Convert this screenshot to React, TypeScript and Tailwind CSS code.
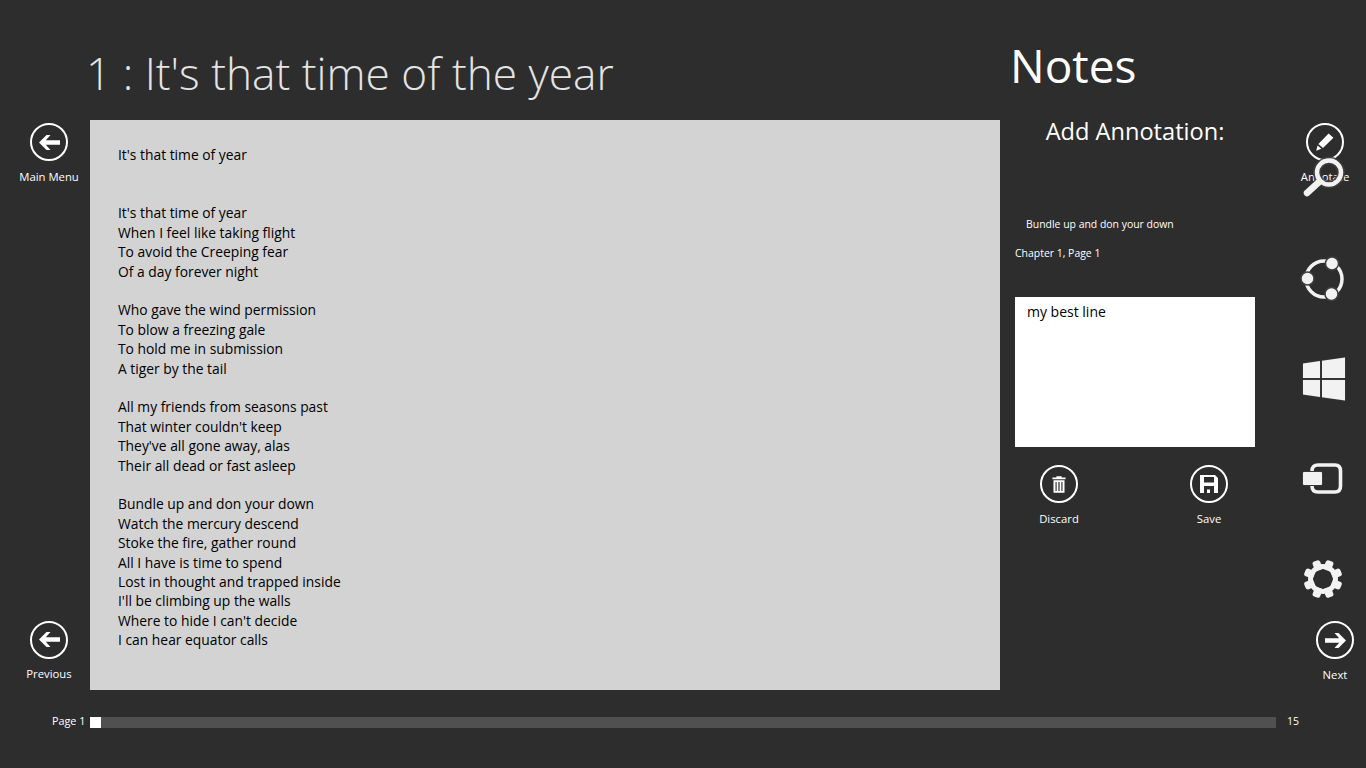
const stanzas = [
  ["It's that time of year", "When I feel like taking flight", "To avoid the Creeping fear", "Of a day forever night"],
  ["Who gave the wind permission", "To blow a freezing gale", "To hold me in submission", "A tiger by the tail"],
  ["All my friends from seasons past", "That winter couldn't keep", "They've all gone away, alas", "Their all dead or fast asleep"],
  [
    "Bundle up and don your down",
    "Watch the mercury descend",
    "Stoke the fire, gather round",
    "All I have is time to spend",
    "Lost in thought and trapped inside",
    "I'll be climbing up the walls",
    "Where to hide I can't decide",
    "I can hear equator calls",
  ],
];

function ArrowIcon({ right = false }: { right?: boolean }) {
  return (
    <svg viewBox="0 0 21 15" className={right ? "w-[21px] h-[15px] rotate-180" : "w-[21px] h-[15px]"}>
      <path d="M7.5 0 L0 7.5 L7.5 15 H11.5 L6.8 9.8 H21 V5.2 H6.8 L11.5 0 Z" fill="#fff" />
    </svg>
  );
}

function PencilIcon() {
  return (
    <svg viewBox="0 0 20 20" className="w-5 h-5">
      <path d="M13.6 1.6 L18.4 5.8 L8 16 L3.4 12 Z" fill="#fff" />
      <path d="M2.6 13.4 L6.4 16.8 L1.2 18.8 Z" fill="#fff" />
    </svg>
  );
}

function TrashIcon() {
  return (
    <svg viewBox="0 0 16 20" className="w-[14px] h-[19px]">
      <path d="M5 0.5 H11 V2 H15.5 V4 H0.5 V2 H5 Z" fill="#fff" />
      <path d="M1.7 5 H14.3 V19.5 H1.7 Z M4 7 V17.5 H5.3 V7 Z M7.3 7 V17.5 H8.7 V7 Z M10.7 7 V17.5 H12 V7 Z" fill="#fff" fillRule="evenodd" />
    </svg>
  );
}

function SaveIcon() {
  return (
    <svg viewBox="0 0 18 18" className="w-[18px] h-[18px]">
      <path
        d="M0 0 H15 L18 3 V18 H0 Z M4 2 V7.5 H14 V2 Z M4 11 V18 H14 V11 Z M7 14.5 H10 V18 H7 Z"
        fill="#fff"
        fillRule="evenodd"
      />
    </svg>
  );
}

function CircleButton({ label, children, className = "" }: { label: string; children: React.ReactNode; className?: string }) {
  return (
    <div className={`flex flex-col items-center w-[80px] ${className}`}>
      <div className="w-[38px] h-[38px] rounded-full border-2 border-white flex items-center justify-center">{children}</div>
      <span className="text-[11.3px] leading-[16px] mt-[7.5px] text-white whitespace-nowrap">{label}</span>
    </div>
  );
}

function SearchIcon() {
  return (
    <svg viewBox="0 0 44 44" className="w-[44px] h-[44px]">
      <circle cx="28" cy="16.5" r="12" fill="none" stroke="#3f3f3f" strokeWidth="8" opacity="0.8" />
      <path d="M18 26 L6 37" stroke="#f2f2f2" strokeWidth="6.5" strokeLinecap="round" />
      <circle cx="28" cy="16.5" r="12" fill="none" stroke="#f2f2f2" strokeWidth="4.5" />
    </svg>
  );
}

function ShareIcon() {
  return (
    <svg viewBox="0 0 46 46" className="w-[46px] h-[46px]">
      <circle cx="24" cy="23" r="18" fill="none" stroke="#f2f2f2" strokeWidth="3.5" />
      <g fill="#f2f2f2" stroke="#3f3f3f" strokeWidth="1.5">
        <circle cx="32" cy="7.5" r="6.5" />
        <circle cx="7.5" cy="22.5" r="6.5" />
        <circle cx="31.5" cy="38" r="6.5" />
      </g>
    </svg>
  );
}

function WindowsIcon() {
  return (
    <svg viewBox="0 0 44 44" className="w-[44px] h-[44px]">
      <path
        d="M1 6.5 L18 4 V21 H1 Z M20 3.7 L43 0.5 V21 H20 Z M1 23 H18 V40 L1 37.5 Z M20 23 H43 V43.5 L20 40.3 Z"
        fill="#f2f2f2"
        stroke="#3f3f3f"
        strokeWidth="1"
        paintOrder="stroke"
      />
    </svg>
  );
}

function DevicesIcon() {
  return (
    <svg viewBox="0 0 42 32" className="w-[42px] h-[32px]">
      <path
        d="M10 9 Q10 3 16 3 H33 Q38.5 3 38.5 9 V24 Q38.5 30 33 30 H16 Q10 30 10 24"
        fill="none"
        stroke="#f2f2f2"
        strokeWidth="3.6"
      />
      <rect x="1" y="10" width="19" height="13" rx="1" fill="#f2f2f2" stroke="#3f3f3f" strokeWidth="1.5" paintOrder="stroke" />
    </svg>
  );
}

function GearIcon() {
  const teeth = [0, 45, 90, 135, 180, 225, 270, 315];
  return (
    <svg viewBox="0 0 40 40" className="w-[40px] h-[40px]">
      {teeth.map((deg) => (
        <rect key={deg} x="16" y="0.5" width="8" height="10" rx="2.5" fill="#f2f2f2" transform={`rotate(${deg + 22.5} 20 20)`} />
      ))}
      <circle cx="20" cy="20" r="12.5" fill="none" stroke="#f2f2f2" strokeWidth="5" />
    </svg>
  );
}

export default function App() {
  return (
    <div
      className="w-[1366px] h-[768px] overflow-hidden bg-[#2d2d2d] text-white flex flex-col"
      style={{ fontFamily: '"Open Sans", "Noto Sans", sans-serif' }}
    >
      <div className="flex h-[690px]">
        {/* left rail */}
        <div className="w-[90px] shrink-0 pt-[123px] pb-[8px] flex flex-col justify-between">
          <CircleButton label="Main Menu" className="ml-[9px]">
            <ArrowIcon />
          </CircleButton>
          <CircleButton label="Previous" className="ml-[9px]">
            <ArrowIcon />
          </CircleButton>
        </div>

        {/* reader */}
        <div className="w-[910px] shrink-0 flex flex-col">
          <div className="h-[120px] shrink-0 pt-[38px]">
            <h1 className="text-[44.2px] leading-[70px] font-light text-[#e4e4e4] whitespace-nowrap -ml-[4px]">1 : It's that time of the year</h1>
          </div>
          <div className="h-[570px] bg-[#d3d3d3] text-black pl-[28px] pt-[25px] text-[13.85px] leading-[19.4px]">
            <p className="mb-[39px]">It's that time of year</p>
            {stanzas.map((lines, i) => (
              <div key={i} className="mb-[19.4px]">
                {lines.map((line) => (
                  <p key={line} className="whitespace-nowrap">
                    {line}
                  </p>
                ))}
              </div>
            ))}
          </div>
        </div>

        {/* notes */}
        <div className="w-[270px] shrink-0 pl-[15px] flex flex-col">
          <h2 className="text-[46px] leading-[60px] mt-[35px] -ml-[5px] text-white">Notes</h2>
          <h3 className="w-[240px] text-center text-[23.6px] leading-[32px] mt-[20px]">Add Annotation:</h3>
          <p className="text-[10.45px] leading-[16px] ml-[11px] mt-[69px]">Bundle up and don your down</p>
          <p className="text-[10.45px] leading-[16px] mt-[13px]">Chapter 1, Page 1</p>
          <div className="w-[240px] h-[150px] bg-white text-black mt-[36px] px-[12px] py-[5px] text-[14px] leading-[20px]">my best line</div>
          <div className="w-[240px] flex justify-between pl-[4px] pr-[6px] mt-[18px]">
            <CircleButton label="Discard">
              <TrashIcon />
            </CircleButton>
            <CircleButton label="Save">
              <SaveIcon />
            </CircleButton>
          </div>
        </div>

        {/* right rail */}
        <div className="w-[96px] shrink-0 relative flex flex-col">
          <CircleButton label="Annotate" className="mt-[123px] ml-[15px]">
            <PencilIcon />
          </CircleButton>
          <div className="absolute left-[31px] top-[156px]">
            <SearchIcon />
          </div>
          <div className="ml-[30px] mt-[71px]">
            <ShareIcon />
          </div>
          <div className="ml-[32px] mt-[55px]">
            <WindowsIcon />
          </div>
          <div className="ml-[32px] mt-[61px]">
            <DevicesIcon />
          </div>
          <div className="ml-[33px] mt-[65px]">
            <GearIcon />
          </div>
          <CircleButton label="Next" className="absolute left-[25px] top-[621px]">
            <ArrowIcon right />
          </CircleButton>
        </div>
      </div>

      {/* page slider */}
      <div className="flex items-center h-[11px] mt-[27px] pl-[52px]">
        <span className="text-[10.8px] leading-[16px] w-[38px] whitespace-nowrap mb-[3px]">Page 1</span>
        <div className="w-[1186px] h-[11px] bg-[#505050]">
          <div className="w-[11px] h-[11px] bg-white" />
        </div>
        <span className="text-[10.5px] leading-[16px] ml-[11px] mb-[3px]">15</span>
      </div>
    </div>
  );
}
